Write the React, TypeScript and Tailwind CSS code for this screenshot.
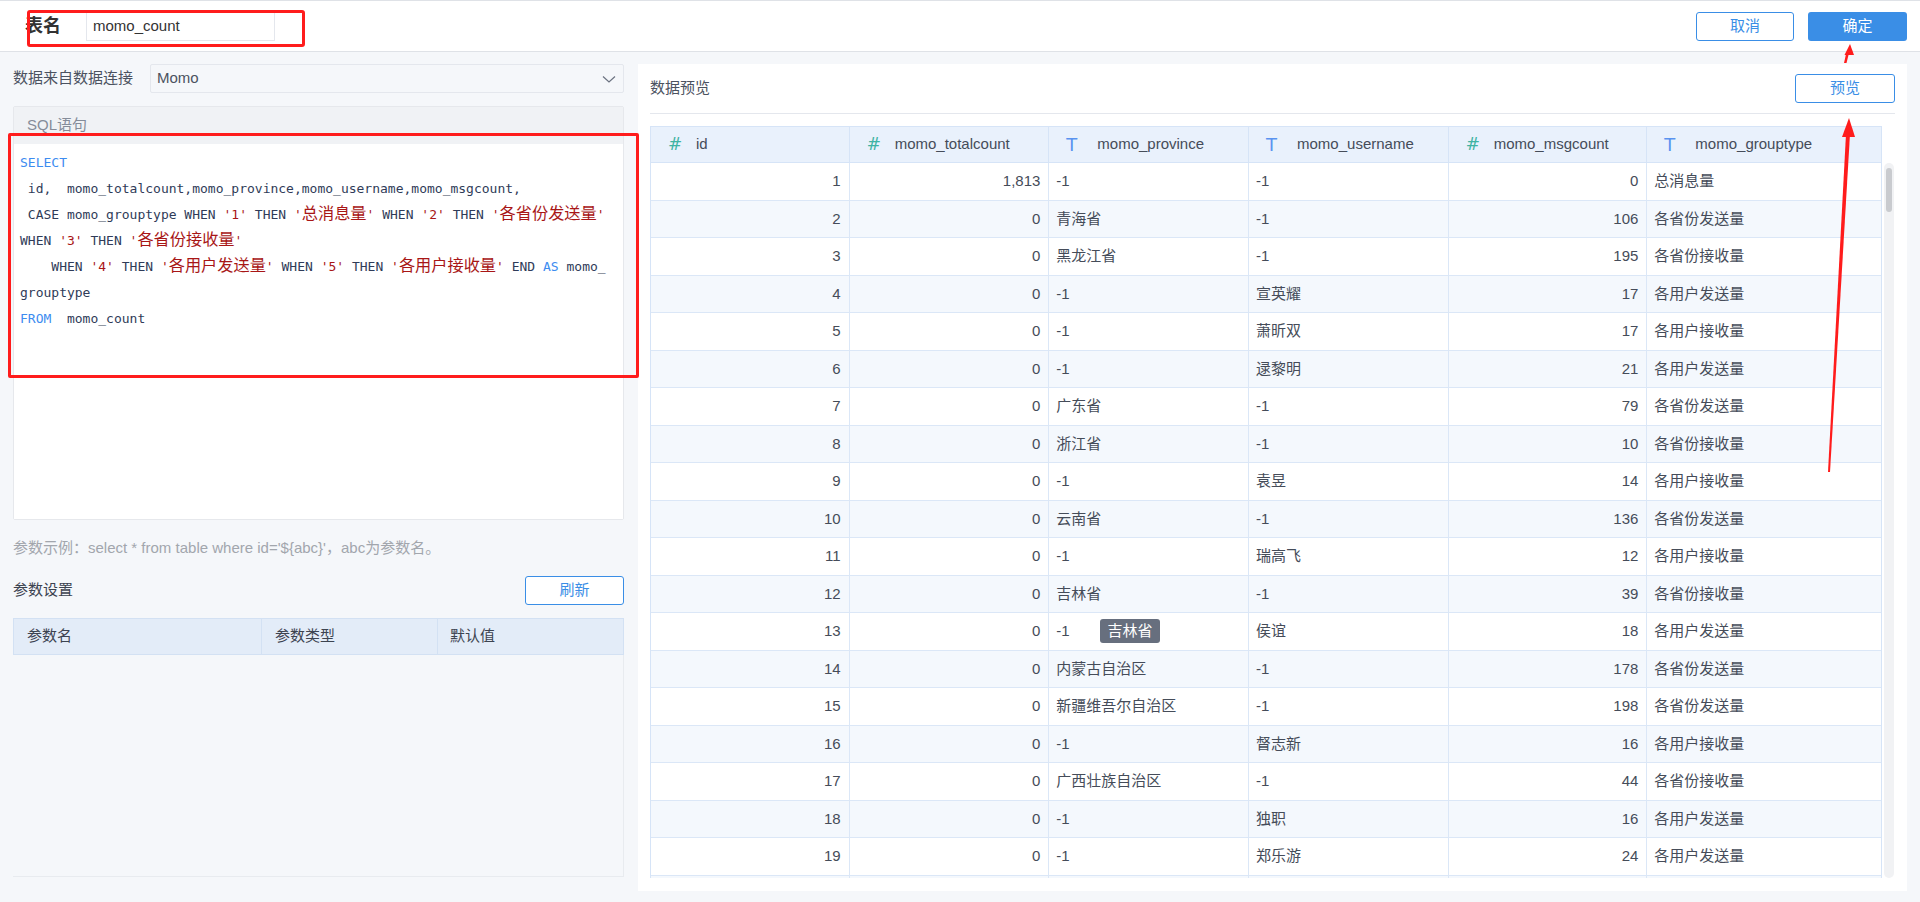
import React from "react";

const FONT = { fontFamily: '"Liberation Sans", "Noto Sans CJK SC", sans-serif' };
const MONO = { fontFamily: '"DejaVu Sans Mono", "Noto Sans CJK SC", monospace' };

type Row = [string, string, string, string, string, string];
const rows: Row[] = [
  ["1", "1,813", "-1", "-1", "0", "总消息量"],
  ["2", "0", "青海省", "-1", "106", "各省份发送量"],
  ["3", "0", "黑龙江省", "-1", "195", "各省份接收量"],
  ["4", "0", "-1", "宣英耀", "17", "各用户发送量"],
  ["5", "0", "-1", "萧昕双", "17", "各用户接收量"],
  ["6", "0", "-1", "逯黎明", "21", "各用户发送量"],
  ["7", "0", "广东省", "-1", "79", "各省份发送量"],
  ["8", "0", "浙江省", "-1", "10", "各省份接收量"],
  ["9", "0", "-1", "袁昱", "14", "各用户接收量"],
  ["10", "0", "云南省", "-1", "136", "各省份发送量"],
  ["11", "0", "-1", "瑞高飞", "12", "各用户接收量"],
  ["12", "0", "吉林省", "-1", "39", "各省份接收量"],
  ["13", "0", "-1", "侯谊", "18", "各用户发送量"],
  ["14", "0", "内蒙古自治区", "-1", "178", "各省份发送量"],
  ["15", "0", "新疆维吾尔自治区", "-1", "198", "各省份发送量"],
  ["16", "0", "-1", "督志新", "16", "各用户接收量"],
  ["17", "0", "广西壮族自治区", "-1", "44", "各省份接收量"],
  ["18", "0", "-1", "独职", "16", "各用户发送量"],
  ["19", "0", "-1", "郑乐游", "24", "各用户发送量"],
  ["", "", "", "", "", ""],
];

const cols: { name: string; kind: "#" | "T"; w: string; num: boolean }[] = [
  { name: "id", kind: "#", w: "w-[199px]", num: true },
  { name: "momo_totalcount", kind: "#", w: "w-[200px]", num: true },
  { name: "momo_province", kind: "T", w: "w-[200px]", num: false },
  { name: "momo_username", kind: "T", w: "w-[200px]", num: false },
  { name: "momo_msgcount", kind: "#", w: "w-[199px]", num: true },
  { name: "momo_grouptype", kind: "T", w: "w-[234px]", num: false },
];

const K = ({ children }: { children: React.ReactNode }) => (
  <span className="text-[#3d8cf0]">{children}</span>
);
const S = ({ children }: { children: React.ReactNode }) => (
  <span className="text-[#a81616]">{children}</span>
);
const C = ({ children }: { children: React.ReactNode }) => (
  <span className="text-[16.2px] leading-none" style={{ fontFamily: '"Noto Sans CJK SC", sans-serif' }}>
    {children}
  </span>
);
const L = ({ children }: { children?: React.ReactNode }) => (
  <div className="h-[26px] leading-[26px] overflow-visible">{children}</div>
);

function Code() {
  return (
    <div className="text-[13px] text-[#2f3b58] whitespace-pre pt-[6px] pl-[6px]" style={MONO}>
      <L>
        <K>SELECT</K>
      </L>
      <L>{" id,  momo_totalcount,momo_province,momo_username,momo_msgcount,"}</L>
      <L>
        {" CASE momo_grouptype WHEN "}
        <S>{"'1'"}</S>
        {" THEN "}
        <S>
          {"'"}
          <C>总消息量</C>
          {"'"}
        </S>
        {" WHEN "}
        <S>{"'2'"}</S>
        {" THEN "}
        <S>
          {"'"}
          <C>各省份发送量</C>
          {"'"}
        </S>
      </L>
      <L>
        {"WHEN "}
        <S>{"'3'"}</S>
        {" THEN "}
        <S>
          {"'"}
          <C>各省份接收量</C>
          {"'"}
        </S>
      </L>
      <L>
        {"    WHEN "}
        <S>{"'4'"}</S>
        {" THEN "}
        <S>
          {"'"}
          <C>各用户发送量</C>
          {"'"}
        </S>
        {" WHEN "}
        <S>{"'5'"}</S>
        {" THEN "}
        <S>
          {"'"}
          <C>各用户接收量</C>
          {"'"}
        </S>
        {" END "}
        <K>AS</K>
        {" momo_"}
      </L>
      <L>grouptype</L>
      <L>
        <K>FROM</K>
        {"  momo_count"}
      </L>
    </div>
  );
}

function Chevron() {
  return (
    <svg width="16" height="16" viewBox="0 0 16 16" fill="none">
      <path d="M2 5.5 L8 11 L14 5.5" stroke="#6b7280" strokeWidth="1.2" />
    </svg>
  );
}

function HeadIcon({ kind }: { kind: "#" | "T" }) {
  return kind === "#" ? (
    <span className="w-[28px] text-[17px] text-[#3fb3a3]" style={{ fontFamily: '"DejaVu Sans", sans-serif' }}>
      #
    </span>
  ) : (
    <span className="w-[31px] text-[18px] text-[#5a93f0]" style={{ fontFamily: '"DejaVu Sans", sans-serif' }}>
      T
    </span>
  );
}

export default function App() {
  return (
    <div className="relative w-[1920px] h-[902px] overflow-hidden bg-[#f5f7fa] text-[#454c59]" style={FONT}>
      {/* Top bar */}
      <div className="h-[52px] bg-white border-t border-b border-[#dfe2e7] flex items-center pl-[25px] pr-[13px]">
        <div className="text-[18px] font-bold text-[#333]">表名</div>
        <div className="ml-[25px] w-[189px] h-[29px] border border-[#e4e7ed] flex items-center pl-[6px] text-[15px] text-[#333]">
          momo_count
        </div>
        <div className="flex-1" />
        <button className="w-[98px] h-[29px] border border-[#3a8ee6] rounded-[3px] text-[#3a8ee6] text-[15px] bg-white">
          取消
        </button>
        <button className="ml-[14px] w-[99px] h-[29px] rounded-[3px] bg-[#3a8ee6] text-white text-[15px]">
          确定
        </button>
      </div>

      {/* Body */}
      <div className="flex pt-[12px] pl-[13px]">
        {/* Left panel */}
        <div className="w-[611px] flex flex-col">
          <div className="h-[29px] flex items-center">
            <div className="w-[137px] text-[15px] text-[#4b5260]">数据来自数据连接</div>
            <div className="flex-1 h-[29px] border border-[#e4e7ed] rounded-[2px] flex items-center justify-between pl-[6px] pr-[6px] text-[15px] text-[#4b5260]">
              <span>Momo</span>
              <Chevron />
            </div>
          </div>

          <div className="mt-[13px] h-[414px] border border-[#e6e8ec] rounded-[2px] flex flex-col bg-white">
            <div className="h-[37px] bg-[#f0f2f5] flex items-center pl-[13px] text-[15px] text-[#858c99]">SQL语句</div>
            <div className="flex-1 bg-white">
              <Code />
            </div>
          </div>

          <div className="h-[56px] flex items-center text-[15px] text-[#a2a6ad]">
            {"参数示例：select * from table where id='${abc}'，abc为参数名。"}
          </div>

          <div className="h-[29px] flex items-center justify-between">
            <div className="text-[15px] text-[#3c4350]">参数设置</div>
            <button className="w-[99px] h-[29px] border border-[#3a8ee6] rounded-[3px] text-[#3a8ee6] text-[15px] bg-white">
              刷新
            </button>
          </div>

          <div className="mt-[13px] h-[37px] bg-[#e3ecf8] border border-[#d3e1f3] flex text-[15px] text-[#3c4350]">
            <div className="w-[248px] border-r border-[#d3e1f3] flex items-center pl-[13px]">参数名</div>
            <div className="w-[176px] border-r border-[#d3e1f3] flex items-center pl-[13px]">参数类型</div>
            <div className="flex-1 flex items-center pl-[12px]">默认值</div>
          </div>
          <div className="h-[222px] border-r border-b border-[#e8ebef]" />
        </div>

        {/* Right card */}
        <div className="ml-[14px] w-[1269px] h-[827px] bg-white px-[12px] flex flex-col">
          <div className="h-[50px] flex items-center justify-between border-b border-[#e4e7ed]">
            <div className="text-[15px] text-[#4b5260]">数据预览</div>
            <button className="w-[100px] h-[29px] border border-[#3a8ee6] rounded-[3px] text-[#3a8ee6] text-[15px] bg-white">
              预览
            </button>
          </div>

          <div className="mt-[12px] flex flex-col">
            {/* header */}
            <div className="flex h-[37px] w-[1232px] bg-[#e9f1fc] border border-[#d6e4f7] text-[15px] text-[#454c59]">
              {cols.map((c, i) => (
                <div
                  key={c.name}
                  className={`${c.w} h-full flex items-center pl-[17px] ${i < cols.length - 1 ? "border-r border-[#d6e4f7]" : ""}`}
                >
                  <HeadIcon kind={c.kind} />
                  <span>{c.name}</span>
                </div>
              ))}
            </div>
            <div className="flex">
              <div className="w-[1232px] h-[715px] overflow-hidden border-l border-r border-[#d6e4f7]">
                {rows.map((r, ri) => (
                  <div
                    key={ri}
                    className={`flex h-[37.5px] border-b border-[#dbe7f7] text-[15px] text-[#454c59] ${ri % 2 === 1 ? "bg-[#f4f8fd]" : "bg-white"}`}
                  >
                    {cols.map((c, ci) => (
                      <div
                        key={ci}
                        className={`${c.w} h-full flex items-center ${c.num ? "justify-end pr-[8px]" : "pl-[7px]"} ${ci < cols.length - 1 ? "border-r border-[#dbe7f7]" : ""}`}
                      >
                        {r[ci]}
                      </div>
                    ))}
                  </div>
                ))}
              </div>
              <div className="ml-[2px] w-[10px] h-[715px] bg-[#f1f2f4] rounded-[5px] pt-[5px] flex justify-center">
                <div className="w-[6px] h-[44px] bg-[#c9cbcf] rounded-[3px]" />
              </div>
            </div>
          </div>
        </div>
      </div>

      {/* Tooltip */}
      <div className="absolute left-[1100px] top-[619px] w-[60px] h-[24px] bg-[#676f7e] rounded-[3px] text-white text-[15px] flex items-center justify-center">
        吉林省
      </div>

      {/* Annotations */}
      <div className="absolute left-[27px] top-[10px] w-[278px] h-[37px] border-[3px] border-[#ff1c1c] rounded-[3px]" />
      <div className="absolute left-[8px] top-[133px] w-[631px] h-[245px] border-[3px] border-[#ff1c1c] rounded-[2px]" />
      <svg className="absolute left-0 top-0" width="1920" height="902" viewBox="0 0 1920 902">
        <polygon points="1844,63 1846.5,63 1849,53 1846.5,52" fill="#ff1c1c" />
        <polygon points="1850,44 1844.5,55 1854,55" fill="#ff1c1c" />
        <polygon points="1828,472 1830,472 1850,134 1846,134" fill="#ff1c1c" />
        <polygon points="1849,118 1842,137 1855,137" fill="#ff1c1c" />
      </svg>
    </div>
  );
}
